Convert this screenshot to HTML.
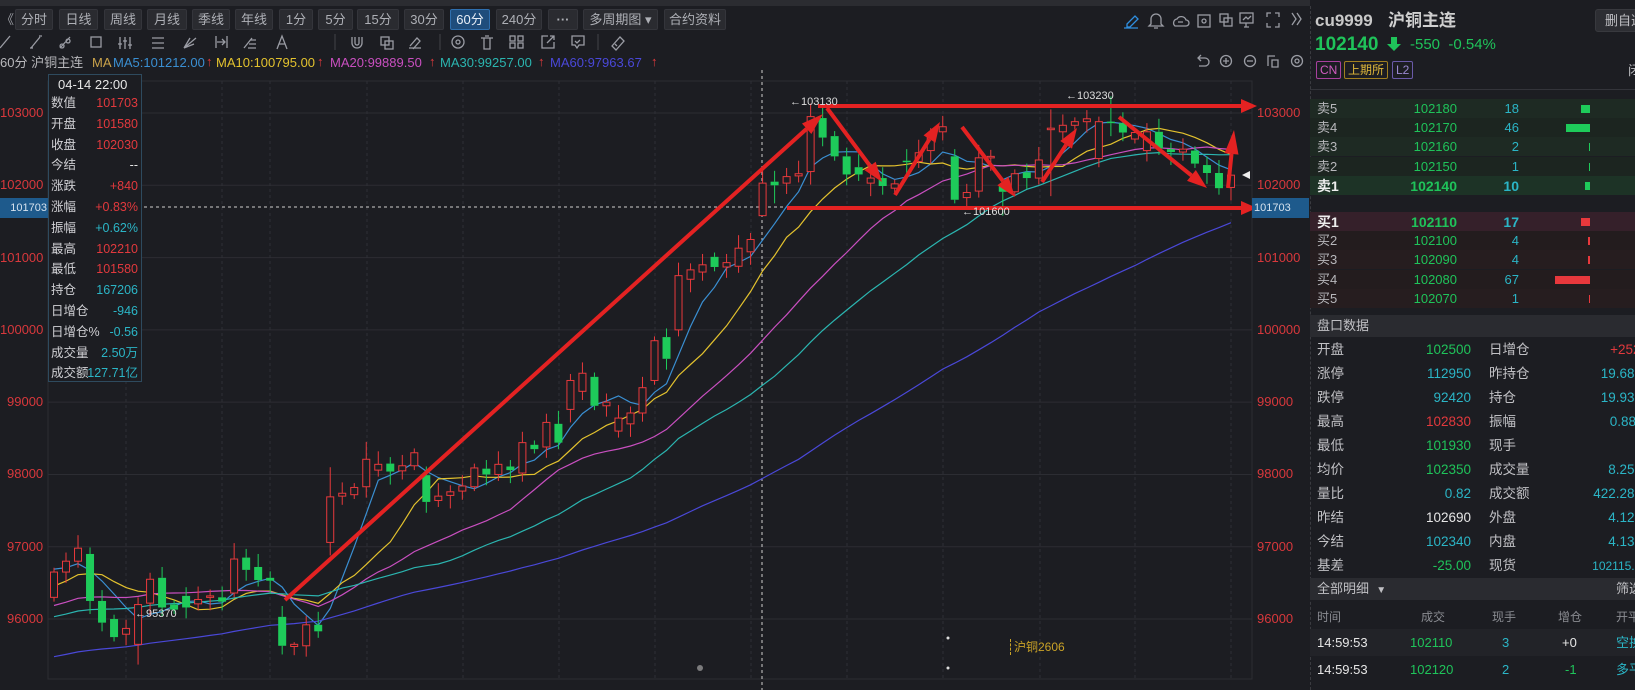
<!DOCTYPE html>
<html><head><meta charset="utf-8">
<style>
*{margin:0;padding:0;box-sizing:border-box}
body{width:1635px;height:690px;overflow:hidden;background:#1c1d22;font-family:"Liberation Sans","Noto Sans CJK SC",sans-serif;color:#c8c8c8;position:relative;line-height:16px}
.a{position:absolute;white-space:nowrap;line-height:16px}
.btn{position:absolute;top:9px;height:21px;background:#2a2b30;border:1px solid #34353b;border-radius:2px;color:#aeb0b6;font-size:13px;line-height:19px;text-align:center}
.btn.on{background:#1f4d7c;border-color:#2f6fae;color:#e8eef6}
.g{color:#1fc35a}.r{color:#e2393d}.t{color:#2bb5c6}.w{color:#e6e6e6}.gr{color:#8a8c92}
.lg{font-size:13px}
#rp{position:absolute;left:1310px;top:0;width:325px;height:690px;overflow:hidden;background:#1c1d22}
#rp .a{position:absolute}
</style></head><body>
<div class="a" style="left:0;top:0;width:1635px;height:6px;background:#2b2c31"></div>
<div class="a gr" style="left:1px;top:12px;font-size:13px;color:#9a9ca2">《</div>
<div class="btn" style="left:15px;width:38px">分时</div>
<div class="btn" style="left:59px;width:39px">日线</div>
<div class="btn" style="left:104px;width:38px">周线</div>
<div class="btn" style="left:147px;width:40px">月线</div>
<div class="btn" style="left:192px;width:38px">季线</div>
<div class="btn" style="left:235px;width:38px">年线</div>
<div class="btn" style="left:279px;width:34px">1分</div>
<div class="btn" style="left:318px;width:35px">5分</div>
<div class="btn" style="left:357px;width:42px">15分</div>
<div class="btn" style="left:404px;width:40px">30分</div>
<div class="btn on" style="left:450px;width:40px">60分</div>
<div class="btn" style="left:496px;width:46px">240分</div>
<div class="btn" style="left:548px;width:30px;font-weight:bold">···</div>
<div class="btn" style="left:583px;width:75px">多周期图 ▾</div>
<div class="btn" style="left:664px;width:62px">合约资料</div>

<svg class="a" style="left:0;top:0" width="1635" height="690" xmlns="http://www.w3.org/2000/svg">
<g fill="none" stroke="#9a9ca4" stroke-width="1.3">
<path d="M0 48 L10 36"/>
<path d="M31 48 L40 37 M30 48h3 M39 36h3"/>
<path d="M60 48 L70 37 M62 44a2 2 0 1 0 .1 0 M68 39a2 2 0 1 0 .1 0"/>
<rect x="91" y="37" width="10" height="10"/>
<path d="M120 37v12 M125 37v12 M130 37v12 M118 44h4 M123 41h4 M128 45h4"/>
<path d="M152 38h12 M152 43h12 M152 48h12"/>
<path d="M184 48 L196 38 M184 48 L194 44 M184 48 L190 38"/>
<path d="M216 36v12 M227 36v12 M217 42h8 M222 39l3 3-3 3"/>
<path d="M244 48 L252 38 M250 40h6 M249 44h7 M248 48h8"/>
<path d="M277 49 L282 36 L287 49 M279 44h6"/>
<path d="M335 34v16" stroke="#3a3b40"/>
<path d="M352 37v6a5 5 0 0 0 10 0v-6 M355 37v6a2 2 0 0 0 4 0v-6"/>
<rect x="381" y="37" width="8" height="8"/><rect x="385" y="41" width="8" height="8"/>
<path d="M409 48h12 M410 46l7-8 3 3-7 8"/>
<path d="M440 34v16" stroke="#3a3b40"/>
<circle cx="458" cy="42" r="6"/><circle cx="458" cy="42" r="2"/>
<path d="M481 38h12 M484 38v11h6v-11 M485 36h4"/>
<rect x="510" y="36" width="5" height="5"/><rect x="518" y="36" width="5" height="5"/><rect x="510" y="43" width="5" height="5"/><rect x="518" y="43" width="5" height="5"/>
<path d="M548 36h-6v12h12v-6 M547 43l7-7 M550 36h4v4"/>
<path d="M572 36h12v9h-5l-2 3-2-3h-3z M575 41l2 2 3-3"/>
<path d="M598 34v16" stroke="#3a3b40"/>
<path d="M612 46l8-9 4 4-8 9z M615 44l2 2"/>
<path d="M1127 24l8-8 3 3-8 8h-3z M1124 28h14" stroke="#2f8fe0"/>
<path d="M1151 24v-5a5 5 0 0 1 10 0v5l2 2h-14z M1154 28h4"/>
<path d="M1175 26h11a3 3 0 0 0 0-6 5 5 0 0 0-9-1 4 4 0 0 0-2 7z M1178 22h5"/>
<rect x="1198" y="15" width="12" height="12"/><circle cx="1204" cy="21" r="2"/>
<rect x="1220" y="14" width="8" height="8"/><rect x="1224" y="18" width="8" height="8"/>
<rect x="1240" y="13" width="13" height="10"/><path d="M1244 27h5 M1246 23v4 M1243 20l3-3 2 2 3-3"/>
<path d="M1267 17v-4h4 M1279 17v-4h-4 M1267 23v4h4 M1279 23v4h-4"/>
<path d="M1292 13l4 6-4 6 M1297 13l4 6-4 6"/>
<path d="M1198 58h7a4 4 0 0 1 0 8h-6 M1201 55l-3 3 3 3"/>
<circle cx="1226" cy="61" r="5.5"/><path d="M1223 61h6 M1226 58v6"/>
<circle cx="1250" cy="61" r="5.5"/><path d="M1247 61h6"/>
<path d="M1268 66v-10h7 M1272 60h6v7h-6z"/>
<circle cx="1297" cy="61" r="5.5"/><circle cx="1297" cy="61" r="2"/>
</g>
<g id="grid"></g>
<g id="ma" fill="none" stroke-width="1.2"></g>
<g id="cd"></g>
<g id="marks"></g>
</svg>

<div class="a lg" style="left:0;top:55px;color:#b8b8bc">60分 沪铜主连</div>
<div class="a lg" style="left:92px;top:55px;color:#c9a24a">MA</div>
<div class="a lg" style="left:113px;top:55px;color:#3a8fd2">MA5:101212.00</div>
<div class="a lg r" style="left:206px;top:54px">↑</div>
<div class="a lg" style="left:216px;top:55px;color:#e3c22e">MA10:100795.00</div>
<div class="a lg r" style="left:317px;top:54px">↑</div>
<div class="a lg" style="left:330px;top:55px;color:#c94fc0">MA20:99889.50</div>
<div class="a lg r" style="left:429px;top:54px">↑</div>
<div class="a lg" style="left:440px;top:55px;color:#2bb5b0">MA30:99257.00</div>
<div class="a lg r" style="left:538px;top:54px">↑</div>
<div class="a lg" style="left:550px;top:55px;color:#4a48d8">MA60:97963.67</div>
<div class="a lg r" style="left:651px;top:54px">↑</div>

<div class="a" style="left:0;top:198px;width:48px;height:20px;background:#1e5a8c;color:#d6e2ee;font-size:11px;line-height:20px;text-align:right;padding-right:1px">101703</div>
<div class="a" style="left:1252px;top:198px;width:57px;height:20px;background:#1e5a8c;color:#d6e2ee;font-size:11px;line-height:20px;padding-left:2px">101703</div>

<div class="a" style="left:48px;top:74px;width:94px;height:308px;background:#1c1d22;border:1px solid #2e4a5e"></div>
<div class="a w" style="left:58px;top:77px;font-size:13px">04-14 22:00</div>

<div class="a" style="left:790px;top:94px;font-size:11px;color:#ddd">←103130</div>
<div class="a" style="left:1066px;top:88px;font-size:11px;color:#ddd">←103230</div>
<div class="a" style="left:962px;top:204px;font-size:11px;color:#ddd">←101600</div>
<div class="a" style="left:135px;top:606px;font-size:11px;color:#ddd">←95370</div>
<div class="a" style="left:1010px;top:639px;font-size:12px;color:#c9a227;border-left:1px dashed #c9a227;padding-left:3px">沪铜2606</div>

<div id="rp">
<div class="a" style="left:0;top:6px;width:0;height:684px;border-left:1px dashed #3a3b40"></div>
<div class="a" style="left:5px;top:12px;font-size:17px;font-weight:bold;color:#c8c8c8;line-height:18px">cu9999</div>
<div class="a" style="left:78px;top:12px;font-size:17px;font-weight:bold;color:#d0d0d0;line-height:18px">沪铜主连</div>
<div class="a" style="left:285px;top:9px;width:60px;height:23px;background:#2d2e33;border:1px solid #38393e;border-radius:3px;font-size:13px;line-height:21px;padding-left:9px;color:#c0c0c4">删自选</div>
<div class="a g" style="left:5px;top:35px;font-size:19px;font-weight:bold;line-height:20px">102140</div>
<svg class="a" style="left:77px;top:36px" width="14" height="16"><path d="M4 1h6v7h4l-7 7-7-7h4z" fill="#1fc35a"/></svg>
<div class="a g" style="left:100px;top:37px;font-size:15px">-550&nbsp; -0.54%</div>
<div class="a" style="left:6px;top:61px;height:18px;border:1px solid #a8409e;color:#d05cc0;font-size:12px;line-height:16px;padding:0 3px;border-radius:2px">CN</div>
<div class="a" style="left:34px;top:61px;height:18px;border:1px solid #a07f20;color:#e0b83a;font-size:12px;line-height:16px;padding:0 3px;border-radius:2px">上期所</div>
<div class="a" style="left:82px;top:61px;height:18px;border:1px solid #6a5aa8;color:#9a8ad0;font-size:12px;line-height:16px;padding:0 3px;border-radius:2px">L2</div>
<div class="a" style="left:318px;top:63px;font-size:13px;color:#c0c0c4">闭</div>
<div class="a" style="left:0;top:89px;width:325px;height:1px;background:#33343a"></div>
<div id="ob"></div>
<div class="a" style="left:0;top:315px;width:325px;height:22px;background:#2a2b30"></div>
<div class="a" style="left:7px;top:318px;font-size:13px;color:#c0c0c4">盘口数据</div>
<div id="pk"></div>
<div class="a" style="left:0;top:578px;width:325px;height:22px;background:#2a2b30"></div>
<div class="a" style="left:7px;top:581px;font-size:13px;color:#c0c0c4">全部明细 &nbsp;<span style="font-size:10px">▼</span></div>
<div class="a" style="left:306px;top:581px;font-size:13px;color:#c0c0c4">筛选</div>
<div class="a gr" style="left:7px;top:609px;font-size:12px">时间</div>
<div class="a gr" style="left:111px;top:609px;font-size:12px">成交</div>
<div class="a gr" style="left:182px;top:609px;font-size:12px">现手</div>
<div class="a gr" style="left:248px;top:609px;font-size:12px">增仓</div>
<div class="a gr" style="left:306px;top:609px;font-size:12px">开平</div>
<div class="a" style="left:0;top:629px;width:325px;height:27px;background:#222328"></div>
<div class="a w" style="left:7px;top:635px;font-size:13px">14:59:53</div>
<div class="a g" style="left:100px;top:635px;font-size:13px">102110</div>
<div class="a t" style="left:192px;top:635px;font-size:13px">3</div>
<div class="a w" style="left:252px;top:635px;font-size:13px">+0</div>
<div class="a t" style="left:306px;top:635px;font-size:13px">空换</div>
<div class="a w" style="left:7px;top:662px;font-size:13px">14:59:53</div>
<div class="a g" style="left:100px;top:662px;font-size:13px">102120</div>
<div class="a t" style="left:192px;top:662px;font-size:13px">2</div>
<div class="a g" style="left:255px;top:662px;font-size:13px">-1</div>
<div class="a t" style="left:306px;top:662px;font-size:13px">多平</div>
</div>

<script>
var NS="http://www.w3.org/2000/svg";
function Y(p){return 113+(103000-p)*0.07229;}
function el(par,tag,at){var e=document.createElementNS(NS,tag);for(var k in at)e.setAttribute(k,at[k]);par.appendChild(e);return e;}
function div(html,css,par){var d=document.createElement('div');d.className='a';d.style.cssText=css;d.innerHTML=html;(par||document.body).appendChild(d);}
var RP=document.getElementById('rp');
var grid=document.getElementById('grid');
el(grid,'rect',{x:48,y:81,width:1204,height:598,fill:'none',stroke:'#2c2d33'});
for(var p=96000;p<=103000;p+=1000){var y=Y(p);el(grid,'line',{x1:48,x2:1252,y1:y,y2:y,stroke:'#2c2d33'});
 div(p,'left:'+(p>=100000?0:7)+'px;top:'+(y-8)+'px;font-size:13px;color:#d8383c');
 div(p,'left:1257px;top:'+(y-8)+'px;font-size:13px;color:#d8383c');}
[126,222,270,367,463,559,655,751,847,943,1040,1135,1231].forEach(function(x){el(grid,'line',{x1:x,x2:x,y1:81,y2:679,stroke:'#2e2f35','stroke-dasharray':'3,3'});});
el(grid,'line',{x1:762,x2:762,y1:70,y2:690,stroke:'#cfcfcf','stroke-dasharray':'3,3'});
el(grid,'line',{x1:48,x2:1252,y1:207,y2:207,stroke:'#cfcfcf','stroke-dasharray':'3,3'});
var D=[[96300,96650],[96650,96800],[96800,96980],[96900,96250],[96250,95950],[96000,95750],[95790,95870],[95650,96200,96300,95370],[96220,96550],[96570,96160],[96200,96130],[96320,96160],[96210,96270],[96300,96320],[96300,96240],[96360,96830,97050],[96850,96680],[96720,96540],[96570,96530],[96030,95630],[95620,95650,95680,95500],[95630,95920],[95920,95830],[97060,97690,98100],[97700,97740],[97720,97820],[97830,98210,98450],[98060,98140],[98150,98040],[98050,98120],[98120,98300],[97990,97620],[97640,97700],[97710,97760],[97770,97840],[97830,98090],[98080,98000],[98000,98140],[98110,98060],[98020,98440],[98410,98350],[98380,98720],[98700,98440],[98900,99300],[99150,99400],[99350,98950],[98950,99000],[98600,98780],[98700,98850],[98850,99200],[99300,99850],[99900,99600],[100000,100750],[100700,100830],[100800,100900],[101010,100870],[100870,100930],[100880,101130],[101080,101250],[101580,102030,102210,101580],[102050,102000,102200,101750],[102030,102120],[102130,102160],[102190,102950,103130],[102930,102660],[102680,102400,102750],[102400,102150],[102250,102150],[102030,102100,102200,101850],[102100,101990],[101960,102020],[102340,102320,102500],[102330,102450],[102480,102700],[102740,102810],[102400,101800,102500,101750],[101830,101900],[101920,102380],[102380,102400],[101990,101910,102050,101580],[101910,102160],[102180,102100],[102100,102350],[102770,102790,103050,101850],[102740,102830],[102830,102880],[102880,102920],[102370,102880,102950,102250],[102880,102860,103230],[102860,102730],[102640,102730],[102480,102740],[102740,102510],[102500,102460],[102460,102500],[102480,102300],[102280,102170],[102170,101960],[101970,102140]];
var cd=document.getElementById('cd');var closes=[];
var pre=[];for(var i=0;i<30;i++)pre.push(94900);for(i=0;i<10;i++)pre.push(95700);for(i=0;i<10;i++)pre.push(95900);for(i=0;i<5;i++)pre.push(96100);for(i=0;i<5;i++)pre.push(96700);
D.forEach(function(d,i){var x=54+i*12.01,o=d[0],c=d[1];var h=d[2]||Math.max(o,c)+60+((i*37)%5)*30;var l=d[3]||Math.min(o,c)-60-((i*53)%5)*30;
 var up=c>=o,col=up?'#e8393c':'#1ecb5a';
 var t=Y(Math.max(o,c)),b=Y(Math.min(o,c));if(b-t<1.5)b=t+1.5;
 el(cd,'line',{x1:x,x2:x,y1:Y(h),y2:t,stroke:col});el(cd,'line',{x1:x,x2:x,y1:b,y2:Y(l),stroke:col});
 if(up)el(cd,'rect',{x:x-3.5,y:t,width:7,height:b-t,fill:'#1c1d22',stroke:col});else el(cd,'rect',{x:x-4,y:t,width:8,height:b-t,fill:col});
 closes.push(c);});
var all=pre.concat(closes),ma=document.getElementById('ma');
[[5,'#3a8fd2'],[10,'#e3c22e'],[20,'#c94fc0'],[30,'#2bb5b0'],[60,'#4a48d8']].forEach(function(m){var pts=[];
 for(var i=0;i<closes.length;i++){var j=i+60,s=0;for(var k=j-m[0]+1;k<=j;k++)s+=all[k];pts.push((54+i*12.01).toFixed(1)+','+Y(s/m[0]).toFixed(1));}
 el(ma,'polyline',{points:pts.join(' '),stroke:m[1]});});
var mk=document.getElementById('marks');
function arr(x1,y1,x2,y2,hs){hs=hs||14;var a=Math.atan2(y2-y1,x2-x1),bx=x2-hs*Math.cos(a),by=y2-hs*Math.sin(a);
 el(mk,'line',{x1:x1,y1:y1,x2:bx,y2:by,stroke:'#e42222','stroke-width':4});
 var px=Math.sin(a)*7,py=-Math.cos(a)*7;el(mk,'polygon',{points:x2+','+y2+' '+(bx+px)+','+(by+py)+' '+(bx-px)+','+(by-py),fill:'#e42222'});}
arr(285,600,823,114,22);arr(818,106,1257,106,16);arr(787,208,1257,208,16);
arr(827,108,882,182,20);arr(895,195,940,122,20);arr(962,127,1015,197,20);arr(1042,182,1077,128,20);arr(1119,117,1207,188,20);arr(1228,188,1234,130,24);
el(mk,'polygon',{points:'1242,175 1250,171 1250,179',fill:'#eee'});
el(mk,'circle',{cx:700,cy:668,r:3,fill:'#bbb',opacity:0.6});el(mk,'circle',{cx:948,cy:638,r:1.5,fill:'#ddd'});el(mk,'circle',{cx:948,cy:668,r:1.5,fill:'#ddd'});
var ib=[['数值','101703','r'],['开盘','101580','r'],['收盘','102030','r'],['今结','--','w'],['涨跌','+840','r'],['涨幅','+0.83%','r'],['振幅','+0.62%','t'],['最高','102210','r'],['最低','101580','r'],['持仓','167206','t'],['日增仓','-946','t'],['日增仓%','-0.56','t'],['成交量','2.50万','t'],['成交额','127.71亿','t']];
ib.forEach(function(r,i){var y=95+i*20.8;div(r[0],'left:51px;top:'+y+'px;font-size:12.5px;color:#d0d0d4');div('<span class="'+r[2]+'">'+r[1]+'</span>','left:'+(i==13?84:60)+'px;top:'+y+'px;width:'+(i==13?54:78)+'px;text-align:right;font-size:12.5px');});
function book(rows,y0,bgs,bar){rows.forEach(function(r,i){var y=y0+i*19.2,b=r[4];
 div('','left:0;top:'+y+'px;width:325px;height:19px;background:'+bgs[b?2:i%2],RP);
 var fs='font-size:'+(b?14:13)+'px;'+(b?'font-weight:bold;':'');
 div(r[0],'left:7px;top:'+(y+2)+'px;'+fs+(b?'color:#eee':'color:#b8b8bc'),RP);
 div('<span class="g">'+r[1]+'</span>','left:77px;top:'+(y+2)+'px;width:70px;text-align:right;'+fs,RP);
 div('<span class="t">'+r[2]+'</span>','left:169px;top:'+(y+2)+'px;width:40px;text-align:right;'+fs,RP);
 div('','left:'+(280-r[3])+'px;top:'+(y+6)+'px;width:'+r[3]+'px;height:8px;background:'+bar,RP);});}
book([['卖5','102180','18',9],['卖4','102170','46',24],['卖3','102160','2',1],['卖2','102150','1',1],['卖1','102140','10',5,1]],99,['#1e2a23','#1c2520','#1d3326'],'#1ecb5a');
book([['买1','102110','17',9,1],['买2','102100','4',2],['买3','102090','4',2],['买4','102080','67',35],['买5','102070','1',1]],212,['#261d1f','#231c1e','#35202a'],'#e8383c');
var pk=[['开盘','102500','g','日增仓','+2520','r'],['涨停','112950','t','昨持仓','19.68万','t'],['跌停','92420','t','持仓','19.93万','t'],['最高','102830','r','振幅','0.88%','t'],['最低','101930','g','现手','-','t'],['均价','102350','g','成交量','8.25万','t'],['量比','0.82','t','成交额','422.28亿','t'],['昨结','102690','w','外盘','4.12万','t'],['今结','102340','t','内盘','4.13万','t'],['基差','-25.00','g','现货','102115.00','t']];
pk.forEach(function(r,i){var y=342+i*24;
 div(r[0],'left:7px;top:'+y+'px;font-size:13.5px;color:#c0c0c4',RP);
 div('<span class="'+r[2]+'">'+r[1]+'</span>','left:81px;top:'+y+'px;width:80px;text-align:right;font-size:13.5px',RP);
 div(r[3],'left:179px;top:'+y+'px;font-size:13.5px;color:#c0c0c4',RP);
 div('<span class="'+r[5]+'">'+r[4]+'</span>','left:220px;top:'+y+'px;width:118px;text-align:right;font-size:'+(r[4].length>7?12:13.5)+'px',RP);});
</script>
</body></html>
